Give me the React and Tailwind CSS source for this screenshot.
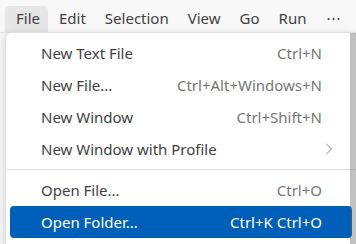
import { ChevronRight } from 'lucide-react';

const BAR = ['File', 'Edit', 'Selection', 'View', 'Go', 'Run'];

const ITEMS = [
  { label: 'New Text File', keys: 'Ctrl+N' },
  { label: 'New File...', keys: 'Ctrl+Alt+Windows+N' },
  { label: 'New Window', keys: 'Ctrl+Shift+N' },
  { label: 'New Window with Profile', sub: true },
  { sep: true },
  { label: 'Open File...', keys: 'Ctrl+O' },
  { label: 'Open Folder...', keys: 'Ctrl+K Ctrl+O', active: true },
];

const App = () => {
  return (
    <div className="relative w-[356px] h-[244px] overflow-hidden bg-[#f8f8f8] text-[15px] text-[#3f3f3f]" style={{ fontFamily: '"Segoe UI", "Noto Sans", sans-serif' }}>
      <div className="flex items-end h-[33px] pl-[5px] border-b border-[#e5e5e5]">
        {BAR.map((b, i) => (
          <div key={b} className={`h-[26px] pl-[11px] pr-[8px] flex items-center leading-none ${i === 0 ? 'bg-[#e6e6e6] rounded-t-[5px]' : ''}`}>
            <span className="-mt-[1px]">{b}</span>
          </div>
        ))}
        <div className="h-[26px] pl-[12px] flex items-center leading-none">
          <span className="-mt-[1px] tracking-[1px]">···</span>
        </div>
      </div>

      <div className="absolute left-[5px] top-[32px] w-[352px] h-[230px] bg-white border border-[#e0e0e0] rounded-[6px] shadow-[0_2px_8px_rgba(0,0,0,0.16)] py-[4px]">
        {ITEMS.map((it, i) =>
          it.sep ? (
            <div key={i} className="my-[4px] h-px bg-[#e0e0e0]" />
          ) : (
            <div key={i} className={`mx-[4px] h-[32px] pl-[31px] pr-[30px] flex items-center justify-between rounded-[4px] ${it.active ? 'bg-[#005fb8] text-white' : ''}`}>
              <span>{it.label}</span>
              {it.sub ? (
                <ChevronRight size={20} strokeWidth={1} className="text-[#6b6b6b] -mr-[17px] -mt-[1px]" />
              ) : (
                <span className={it.active ? 'text-white' : 'text-[#767676]'}>{it.keys}</span>
              )}
            </div>
          )
        )}
      </div>

      <div className="absolute right-0 top-[33px] w-[6px] h-[211px] bg-[rgba(100,100,100,0.4)]" />
    </div>
  );
};

export default App;
